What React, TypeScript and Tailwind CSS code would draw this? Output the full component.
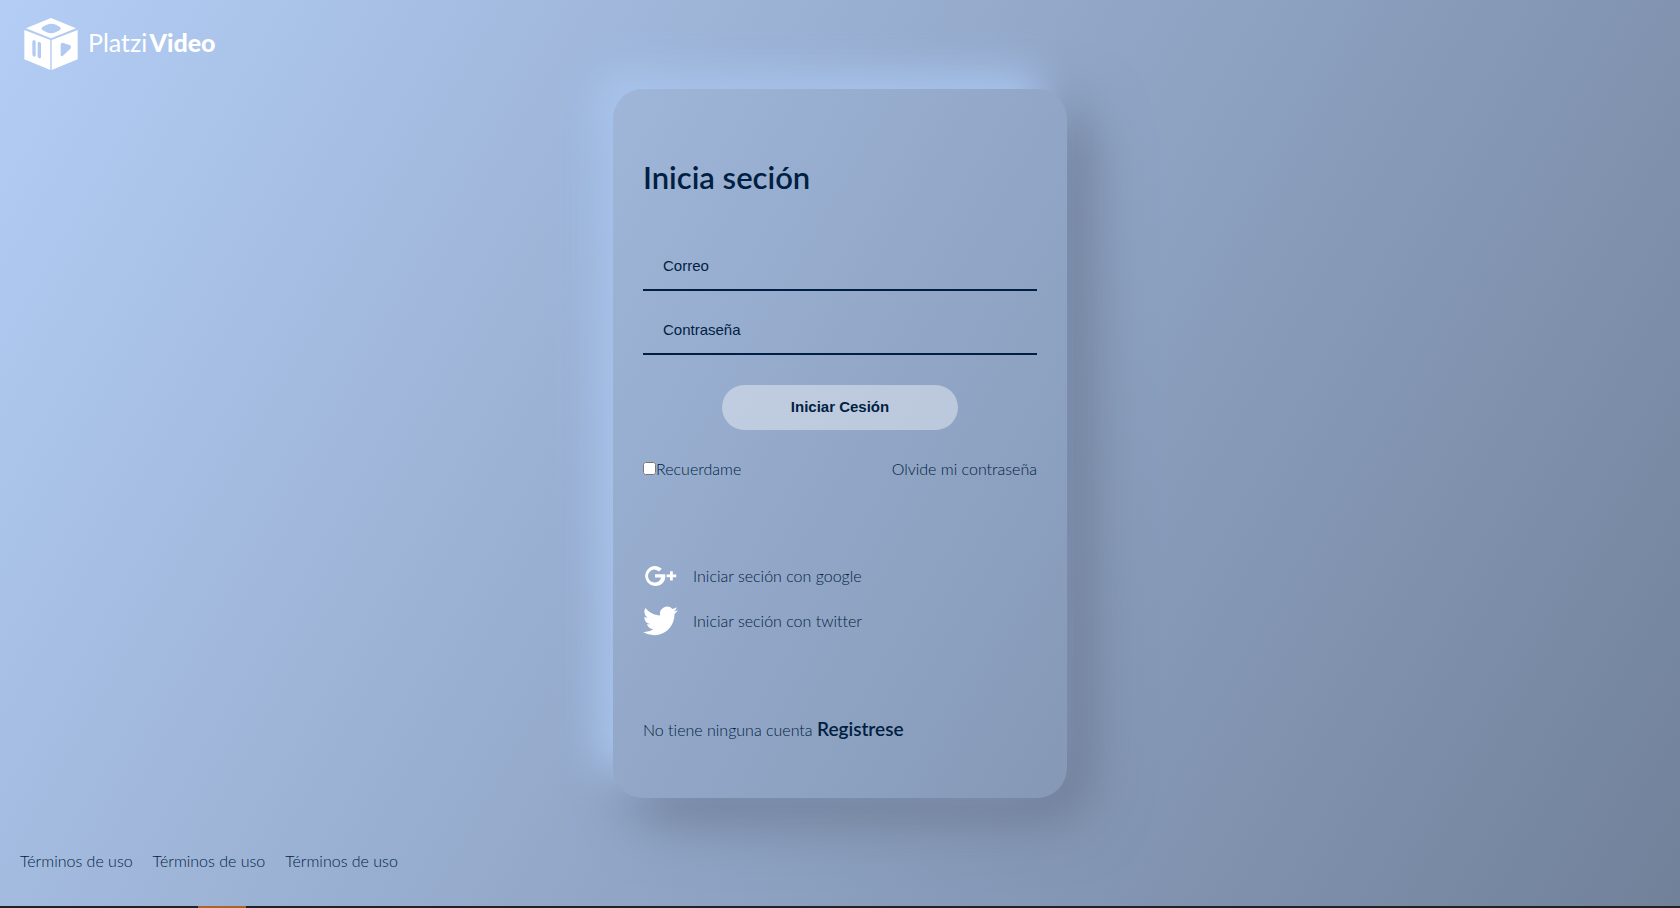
import { useState } from "react";

function Logo() {
  return (
    <a href="#" className="flex w-fit items-center gap-2.5 text-white" aria-label="PlatziVideo">
      <svg viewBox="0 0 160 156" className="h-[52px] w-[54px]" fill="currentColor" aria-hidden="true">
        <path fillRule="evenodd" d="M80 0 155 31 80 61 5 31ZM67 20 54 27Q49 31 54 36L67 43Q81 49 94 43L107 36Q112 31 107 27L95 20Q81 15 67 20Z" />
        <path fillRule="evenodd" d="M0 36 78 66V156L0 124ZM30 66Q24 66 24 72V108Q24 114 29 116Q34 117 34 111V72Q34 67 30 66ZM46 72Q40 70 40 77V114Q40 120 45 121Q50 122 50 116V78Q50 73 46 72Z" />
        <path fillRule="evenodd" d="M82 66 160 36V124L82 156ZM109 80V110Q109 117 115 114L138 92Q142 87 138 82L115 74Q109 74 109 80Z" />
      </svg>
      <span className="flex items-baseline gap-0.5 pb-1">
        <span className="text-[25px]/[32px] font-normal">Platzi</span>
        <span className="text-[25px]/[32px] font-black">Video</span>
      </span>
    </a>
  );
}

const fieldClass =
  "h-12 w-full border-b-2 border-[#001f42] bg-transparent px-5 pb-0.5 font-['Liberation_Sans',sans-serif] text-[15px] text-[#001f42] outline-none placeholder:text-[#001f42] placeholder:opacity-100";

export default function App() {
  const [remember, setRemember] = useState(false);
  return (
    <div className="flex min-h-screen flex-col bg-[linear-gradient(120deg,#b3cdf5,#71819a)] font-['Lato',sans-serif] text-base font-light text-[#001f42] [font-variant-ligatures:none]">
      <header className="h-[89px] px-6 pt-[18px]">
        <Logo />
      </header>
      <main className="flex flex-1 items-start justify-center">
        <section className="flex w-full max-w-[454px] flex-col rounded-[30px] px-[30px] pt-[67px] pb-[54px] shadow-[-20px_-20px_40px_#a9c5ee,20px_20px_60px_#6b7993]">
          <h1 className="text-[31px]/[42px] font-semibold">Inicia seción</h1>
          <form className="mt-[45px] flex flex-col" onSubmit={(e) => e.preventDefault()}>
            <div className="flex flex-col gap-4">
              <input type="email" aria-label="Correo" placeholder="Correo" className={fieldClass} />
              <input type="password" aria-label="Contraseña" placeholder="Contraseña" className={fieldClass} />
            </div>
            <button type="submit" className="mt-[30px] h-[45px] w-3/5 self-center rounded-full bg-white/40 font-['Liberation_Sans',sans-serif] text-[15px] font-bold">
              Iniciar Cesión
            </button>
            <div className="mt-[27px] flex items-center justify-between">
              <label className="flex items-center">
                <input type="checkbox" checked={remember} onChange={(e) => setRemember(e.target.checked)} className="mb-0.5 size-[13px]" />
                Recuerdame
              </label>
              <a href="#">Olvide mi contraseña</a>
            </div>
          </form>
          <div className="mt-[77px] flex flex-col gap-[9px]">
            <a href="#" className="flex items-center gap-[15px]">
              <svg viewBox="0 0 35 36" className="h-9 w-[35px] text-white" fill="currentColor" aria-hidden="true">
                <path d="M12 16.2h10.2c1 6.8-3.2 11.7-10.1 11.7A9.9 9.9 0 1 1 18.8 10.7L16 13.5A6.4 6.4 0 1 0 12 24.4c3.3 0 5.5-1.8 6-4.8H12ZM27 13.2h2.800v3.400h3.400v2.600h-3.400v3.400h-2.800v-3.400h-3.400v-2.600h3.400Z" />
              </svg>
              Iniciar seción con google
            </a>
            <a href="#" className="flex items-center gap-[15px]">
              <svg viewBox="0 0 24 24" className="h-9 w-[35px] text-white" fill="currentColor" aria-hidden="true">
                <path d="M23.954 4.569a10 10 0 0 1-2.825.775 4.958 4.958 0 0 0 2.163-2.723c-.951.555-2.005.959-3.127 1.184a4.920 4.920 0 0 0-8.384 4.482C7.691 8.094 4.066 6.130 1.640 3.161a4.822 4.822 0 0 0-.666 2.475c0 1.710.870 3.213 2.188 4.096a4.904 4.904 0 0 1-2.228-.616v.061a4.923 4.923 0 0 0 3.946 4.827 4.996 4.996 0 0 1-2.212.085 4.937 4.937 0 0 0 4.604 3.417 9.868 9.868 0 0 1-6.102 2.105c-.390 0-.779-.023-1.170-.067a13.995 13.995 0 0 0 7.557 2.209c9.054 0 13.999-7.496 13.999-13.986 0-.209 0-.420-.015-.630a9.936 9.936 0 0 0 2.460-2.548Z" />
              </svg>
              Iniciar seción con twitter
            </a>
          </div>
          <p className="mt-[76px] leading-7">
            No tiene ninguna cuenta{" "}
            <a href="#" className="text-[19px] font-semibold">Registrese</a>
          </p>
        </section>
      </main>
      <footer>
        <nav className="flex gap-5 px-5 pb-[33px]">
          <a href="#">Términos de uso</a>
          <a href="#">Términos de uso</a>
          <a href="#">Términos de uso</a>
        </nav>
        <div className="h-0.5 bg-[#202225] pl-[198px]">
          <div className="h-0.5 w-12 bg-[#ac6329]" />
        </div>
      </footer>
    </div>
  );
}
